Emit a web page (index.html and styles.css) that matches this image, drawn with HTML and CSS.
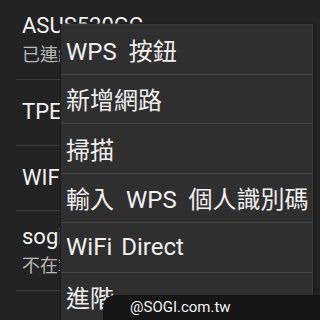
FILE: index.html
```html
<!DOCTYPE html>
<html>
<head>
<meta charset="utf-8">
<link rel="stylesheet" href="styles.css">
</head>
<body>
<div class="screen">
  <div class="list">
    <div class="row two">
      <div class="title">ASUS520GC</div>
      <div class="sub">已連線</div>
    </div>
    <div class="row one">
      <div class="title">TPE-Free</div>
    </div>
    <div class="row one">
      <div class="title">WIFLY</div>
    </div>
    <div class="row two">
      <div class="title">sogi</div>
      <div class="sub">不在範圍內</div>
    </div>
  </div>
  <div class="menu">
    <div class="item">WPS 按鈕</div>
    <div class="item">新增網路</div>
    <div class="item">掃描</div>
    <div class="item">輸入 WPS 個人識別碼</div>
    <div class="item latin">WiFi Direct</div>
    <div class="item">進階</div>
  </div>
  <div class="mark">@SOGI.com.tw</div>
</div>
</body>
</html>
```
FILE: styles.css
```css
html, body {
  margin: 0;
  padding: 0;
  background: #232323;
}
.screen {
  position: relative;
  width: 320px;
  height: 320px;
  overflow: hidden;
  font-family: Roboto, "Noto Sans CJK TC", sans-serif;
}
.list {
  display: flex;
  flex-direction: column;
}
.row {
  display: flex;
  flex-direction: column;
  justify-content: center;
  margin: 0 16px;
  padding-left: 6px;
  border-bottom: 1px solid #3d3d3d;
  box-sizing: border-box;
  white-space: nowrap;
}
.row.two { height: 80px; }
.row.one { height: 65.5px; }
.title {
  font-size: 22px;
  line-height: 26px;
  color: #f2f2f2;
}
.sub {
  font-size: 18px;
  line-height: 24px;
  margin-top: 4px;
  color: #b8b8b8;
}
.menu {
  position: absolute;
  left: 61px;
  top: 24px;
  width: 251px;
  background: #2f2f2f;
  border-top: 1px solid #3a3a3a;
  border-right: 1px solid #383838;
  box-shadow: 3px 0 2px #1c1c1c, -1px 0 1px #1c1c1c;
  display: flex;
  flex-direction: column;
}
.item {
  height: 49.5px;
  box-sizing: border-box;
  border-bottom: 1px solid #474747;
  display: flex;
  align-items: center;
  padding-left: 5px;
  font-size: 24px;
  word-spacing: 6px;
  color: #f0f0f0;
  white-space: nowrap;
}
.item.latin {
  word-spacing: 3px;
}
.mark {
  position: absolute;
  left: 103px;
  top: 295px;
  right: 0;
  bottom: 0;
  background: #161616;
  border-top-left-radius: 12px;
  padding-left: 27px;
  font-size: 15px;
  line-height: 25px;
  color: #f4f4f4;
}
```
